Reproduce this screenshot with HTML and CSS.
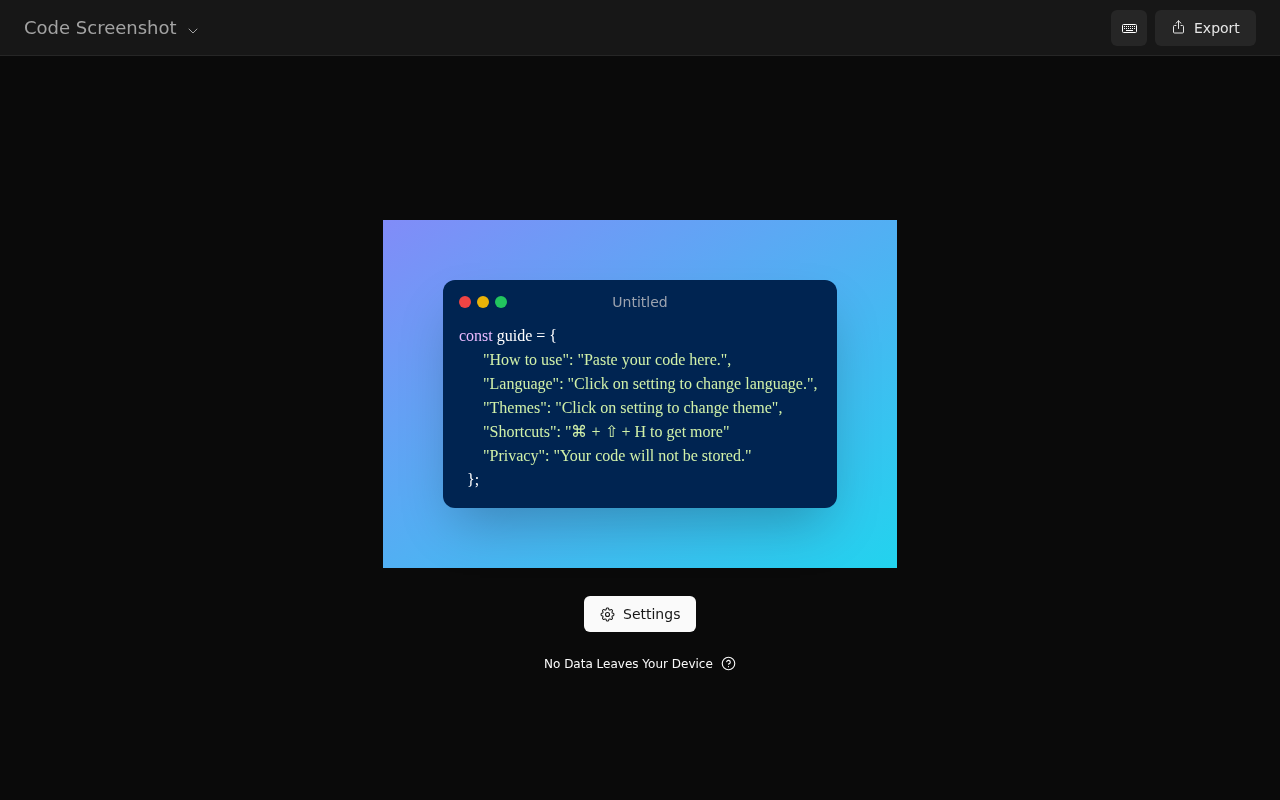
FILE: index.html
```html
<!DOCTYPE html>
<html lang="en">
<head>
<meta charset="utf-8">
<title>Code Screenshot</title>
<link rel="stylesheet" href="styles.css">
</head>
<body>
<header class="topbar">
  <button class="brand">
    <span class="brand-name">Code Screenshot</span>
    <svg class="chevron" viewBox="0 0 24 24" fill="none" stroke="currentColor" stroke-linecap="round" stroke-linejoin="round"><path d="m6 9 6 6 6-6"/></svg>
  </button>
  <div class="actions">
    <button class="btn-dark btn-icon" aria-label="Keyboard shortcuts">
      <svg class="icon-kbd" viewBox="0 0 15 15" fill="none"><rect x="0.5" y="3.5" width="14" height="8" rx="1" stroke="currentColor"/><path stroke="currentColor" stroke-width="1" stroke-dasharray="1 1" d="M2 5.5h11M2 7.5h11"/><path stroke="currentColor" d="M4 9.5h7"/></svg>
    </button>
    <button class="btn-dark btn-export">
      <svg class="icon-share" viewBox="0 0 15 15" fill="none" stroke="currentColor" stroke-linecap="round" stroke-linejoin="round"><path d="M5 5.5H3.500a1 1 0 0 0-1 1v5.500a1 1 0 0 0 1 1h8a1 1 0 0 0 1-1V6.500a1 1 0 0 0-1-1H10"/><path d="M7.500 8.500V0.800M5 3.200 7.500 0.800 10 3.200"/></svg>
      <span>Export</span>
    </button>
  </div>
</header>
<main class="stage">
  <section class="canvas">
    <div class="window">
      <div class="window-bar">
        <div class="lights">
          <span class="light light-red"></span>
          <span class="light light-amber"></span>
          <span class="light light-green"></span>
        </div>
        <div class="window-title">Untitled</div>
      </div>
      <pre class="code"><span class="kw">const</span> <span class="plain">guide = {</span>
<span class="str">      "How to use": "Paste your code here.",</span>
<span class="str">      "Language": "Click on setting to change language.",</span>
<span class="str">      "Themes": "Click on setting to change theme",</span>
<span class="str">      "Shortcuts": "⌘ + ⇧ + H to get more"</span>
<span class="str">      "Privacy": "Your code will not be stored."</span>
<span class="plain">  };</span></pre>
    </div>
  </section>
  <button class="btn-settings">
    <svg class="icon-gear" viewBox="0 0 15 15" fill="none" stroke="currentColor" stroke-width="1.1"><path transform="translate(0.5 0.5) scale(0.933)" d="M7.07095 0.650238C6.67391 0.650238 6.32977 0.925096 6.24198 1.31231L6.0039 2.36247C5.6249 2.47269 5.26335 2.62363 4.92436 2.81013L4.01335 2.23585C3.67748 2.02413 3.23978 2.07312 2.95903 2.35386L2.35294 2.95996C2.0722 3.2407 2.0232 3.6784 2.23493 4.01427L2.80942 4.92561C2.62307 5.2645 2.47227 5.62594 2.36216 6.00481L1.31209 6.24287C0.924883 6.33065 0.650024 6.6748 0.650024 7.07183V7.92897C0.650024 8.32601 0.924883 8.67015 1.31209 8.75794L2.36228 8.99603C2.47246 9.375 2.62335 9.73652 2.80979 10.0755L2.2354 10.9867C2.02367 11.3225 2.07267 11.7602 2.35341 12.041L2.95951 12.6471C3.24025 12.9278 3.67795 12.9768 4.01382 12.7651L4.92506 12.1907C5.26384 12.377 5.62516 12.5278 6.0039 12.6379L6.24198 13.6881C6.32977 14.0753 6.67391 14.3502 7.07095 14.3502H7.92809C8.32512 14.3502 8.66927 14.0753 8.75705 13.6881L8.99505 12.6383C9.37411 12.5282 9.73573 12.3773 10.0748 12.1909L10.986 12.7653C11.3218 12.977 11.7595 12.928 12.0403 12.6473L12.6464 12.0412C12.9271 11.7604 12.9761 11.3227 12.7644 10.9869L12.1902 10.076C12.3768 9.73688 12.5278 9.37515 12.638 8.99596L13.6879 8.75794C14.0751 8.67015 14.35 8.32601 14.35 7.92897V7.07183C14.35 6.6748 14.0751 6.33065 13.6879 6.24287L12.6381 6.00488C12.528 5.62578 12.3771 5.26414 12.1906 4.92507L12.7648 4.01407C12.9766 3.6782 12.9276 3.2405 12.6468 2.95975L12.0407 2.35366C11.76 2.07292 11.3223 2.02392 10.9864 2.23565L10.0755 2.80989C9.73622 2.62328 9.37437 2.47229 8.99505 2.36209L8.75705 1.31231C8.66927 0.925096 8.32512 0.650238 7.92809 0.650238H7.07095Z"/><circle cx="7.5" cy="7.5" r="2"/></svg>
    <span>Settings</span>
  </button>
  <div class="privacy">
    <span>No Data Leaves Your Device</span>
    <svg class="icon-help" viewBox="0 0 24 24" fill="none" stroke="currentColor" stroke-linecap="round" stroke-linejoin="round"><circle cx="12" cy="12" r="10"/><path d="M9.090 9a3 3 0 0 1 5.830 1c0 2-3 3-3 3"/><path d="M12 17h.01"/></svg>
  </div>
</main>
</body>
</html>
```
FILE: styles.css
```css
* { box-sizing: border-box; }
html, body { margin: 0; height: 100%; }
body {
  background: #0a0a0a;
  color: #fff;
  font-family: "DejaVu Sans", sans-serif;
  display: flex;
  flex-direction: column;
  height: 800px;
  overflow: hidden;
}
button { font-family: inherit; border: 0; cursor: pointer; }
.topbar {
  height: 56px;
  flex: none;
  background: #171717;
  border-bottom: 1px solid #262626;
  display: flex;
  align-items: center;
  justify-content: space-between;
  padding: 0 24px;
}
.brand {
  display: flex;
  align-items: center;
  gap: 8px;
  background: none;
  padding: 0;
  color: #a3a3a3;
  will-change: transform;
}
.brand-name { font-size: 18px; line-height: 28px; }
.chevron { width: 16px; height: 16px; margin-top: 5px; stroke-width: 1.5; }
.actions { display: flex; gap: 8px; will-change: transform; }
.btn-dark {
  height: 36px;
  background: #262626;
  color: #e5e5e5;
  border-radius: 6px;
  display: flex;
  align-items: center;
  justify-content: center;
  padding: 0;
}
.btn-icon { width: 36px; color: #fff; }
.icon-kbd { width: 15px; height: 15px; margin-left: 1px; }
.btn-export { gap: 8px; font-size: 14px; width: 101px; justify-content: flex-start; padding-left: 16px; }
.icon-share { width: 15px; height: 15px; margin-top: -1px; }
.stage {
  flex: 1;
  display: flex;
  flex-direction: column;
  align-items: center;
  padding-top: 164px;
}
.canvas {
  width: 514px;
  height: 348px;
  padding: 60px;
  background: linear-gradient(to bottom right, #818cf8, #22d3ee);
}
.window {
  width: 394px;
  height: 228px;
  background: #002451;
  border-radius: 12px;
  box-shadow: 0 25px 50px -12px rgba(0, 0, 0, 0.25);
  padding: 0 16px;
  will-change: transform;
}
.window-bar {
  height: 44px;
  display: flex;
  align-items: center;
  position: relative;
}
.lights { display: flex; gap: 6px; }
.light { width: 12px; height: 12px; border-radius: 50%; }
.light-red { background: #ef4444; }
.light-amber { background: #eab308; }
.light-green { background: #22c55e; }
.window-title {
  position: absolute;
  left: 0;
  right: 0;
  text-align: center;
  font-size: 14px;
  line-height: 20px;
  color: #9ca3af;
}
.code {
  margin: 0;
  font-family: "Liberation Serif", serif;
  font-size: 16px;
  line-height: 24px;
  white-space: pre;
  filter: blur(0.4px);
}
.kw { color: #ebbbff; }
.plain { color: #ffffff; }
.str { color: #d1f1a9; }
.btn-settings {
  margin-top: 28px;
  height: 36px;
  width: 112px;
  background: #fafafa;
  color: #171717;
  border-radius: 6px;
  font-size: 14px;
  display: flex;
  align-items: center;
  justify-content: flex-start;
  padding: 0 0 0 16px;
  gap: 8px;
  will-change: transform;
}
.icon-gear { width: 15px; height: 15px; }
.privacy {
  margin-top: 22px;
  display: flex;
  align-items: center;
  gap: 8px;
  font-size: 12px;
  line-height: 20px;
  color: #fafafa;
  will-change: transform;
}
.icon-help { width: 15px; height: 15px; stroke-width: 1.8; margin-top: -1px; }
```
